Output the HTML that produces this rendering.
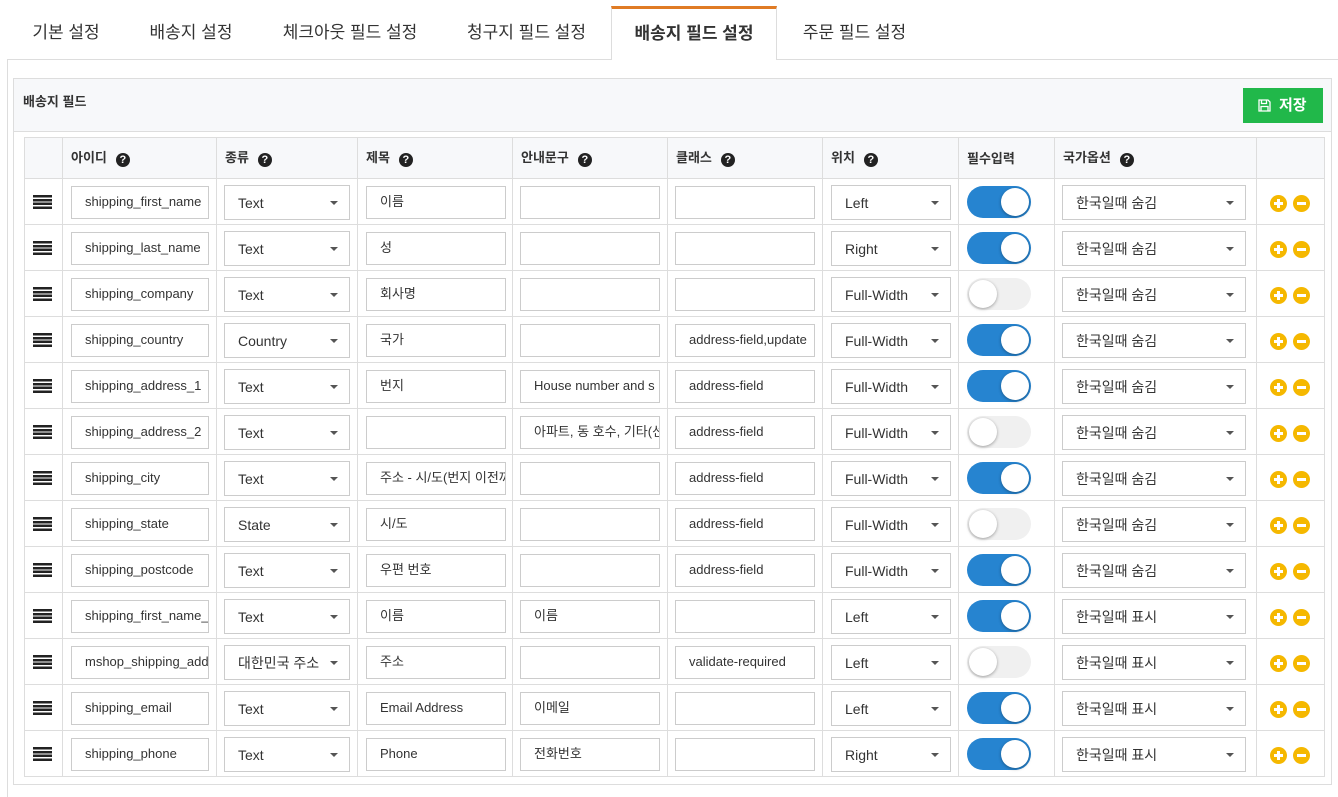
<!DOCTYPE html>
<html><head><meta charset="utf-8">
<style>
*{box-sizing:border-box;margin:0;padding:0}
html,body{width:1338px;height:797px;overflow:hidden}
body{background:#fff;font-family:"Liberation Sans","Noto Sans CJK KR",sans-serif;color:#333;position:relative}
.tab{position:absolute;top:6px;height:54px;font-size:17px;line-height:54px;text-align:center;color:#333}
.tab.act{border:1px solid #ddd;border-top:3px solid #e07b24;border-bottom:none;background:#fff;font-weight:bold;z-index:2;line-height:50px}
.outer{position:absolute;left:7px;top:59px;width:1340px;height:760px;border:1px solid #ddd}
.box{position:absolute;left:13px;top:78px;width:1319px;height:707px;border:1px solid #ddd;background:#fff}
.hdr{position:absolute;left:0;top:0;width:100%;height:53px;background:#f7f8fa;border-bottom:1px solid #ddd}
.hdr b{position:absolute;left:9px;top:12px;font-size:13px}
.save{position:absolute;left:1229px;top:9px;width:80px;height:35px;background:#21b84a;color:#fff;font-weight:bold;font-size:15px;line-height:35px;padding-left:36px}
table{position:absolute;left:24px;top:137px;border-collapse:collapse;table-layout:fixed}
td,th{border:1px solid #ddd;padding:0;position:relative}
th{height:41px;background:#f7f8fa;text-align:left;font-size:13px;padding-left:8px;font-weight:bold;padding-bottom:2px}
td{height:46px}
.q{display:inline-block;width:14px;height:14px;border-radius:50%;background:#222;color:#fff;font-size:11px;line-height:14px;text-align:center;margin-left:9px;vertical-align:-1px}
.in{position:absolute;top:7px;height:33px;border:1px solid #ccc;font-size:13px;line-height:30px;padding-left:13px;white-space:nowrap;overflow:hidden;color:#333}
.sel{position:absolute;top:6px;height:35px;border:1px solid #ccc;font-size:14px;line-height:35px;padding-left:13px;white-space:nowrap;overflow:hidden}
.sel:after{content:"";position:absolute;right:11px;top:15px;border:4px solid transparent;border-top:4px solid #555}
.ham{position:absolute;left:8px;top:16px;width:19px;height:14px;background:repeating-linear-gradient(#222 0 2.6px,transparent 2.6px 3.8px)}
.tg{position:absolute;left:8px;top:7px;width:64px;height:32px;border-radius:16px;background:#2684d0}
.tg:after{content:"";position:absolute;right:2px;top:2px;width:28px;height:28px;border-radius:50%;background:#fff;box-shadow:0 1px 3px rgba(0,0,0,.35)}
.tg.off{background:#f0f0f0}
.tg.off:after{right:auto;left:2px}
.pm{position:absolute;top:16px;width:17px;height:17px;border-radius:50%;background:#f5b800}
.pm:before{content:"";position:absolute;left:4px;top:7px;width:9px;height:3px;background:#fff}
.pm.p:after{content:"";position:absolute;left:7px;top:4px;width:3px;height:9px;background:#fff}
</style></head><body>
<div class="outer"></div>
<div class="tab" style="left:8px;width:116px">기본 설정</div>
<div class="tab" style="left:124px;width:134px">배송지 설정</div>
<div class="tab" style="left:258px;width:184px">체크아웃 필드 설정</div>
<div class="tab" style="left:442px;width:169px">청구지 필드 설정</div>
<div class="tab act" style="left:611px;width:166px">배송지 필드 설정</div>
<div class="tab" style="left:777px;width:155px">주문 필드 설정</div>
<div class="box"><div class="hdr"><b>배송지 필드</b></div>
<div class="save"><svg style="position:absolute;left:15px;top:11px" width="13" height="13" viewBox="0 0 13 13"><path d="M1 1h9l2 2v9H1z M3.5 1v3.5h5V1 M3 12V7.5h7V12" fill="none" stroke="#fff" stroke-width="1.3"/></svg>저장</div></div>
<table>
<colgroup><col style="width:38px"><col style="width:154px"><col style="width:141px"><col style="width:155px"><col style="width:155px"><col style="width:155px"><col style="width:136px"><col style="width:96px"><col style="width:202px"><col style="width:68px"></colgroup>
<tr><th></th><th>아이디<span class="q">?</span></th><th>종류<span class="q">?</span></th><th>제목<span class="q">?</span></th><th>안내문구<span class="q">?</span></th><th>클래스<span class="q">?</span></th><th>위치<span class="q">?</span></th><th>필수입력</th><th>국가옵션<span class="q">?</span></th><th></th></tr>
<tr><td><div class="ham"></div></td><td><div class="in" style="left:8px;width:138px">shipping_first_name</div></td><td><div class="sel" style="left:7px;width:126px">Text</div></td><td><div class="in" style="left:8px;width:140px">이름</div></td><td><div class="in" style="left:7px;width:140px"></div></td><td><div class="in" style="left:7px;width:140px"></div></td><td><div class="sel" style="left:8px;width:120px">Left</div></td><td><div class="tg"></div></td><td><div class="sel" style="left:7px;width:184px">한국일때 숨김</div></td><td><div class="pm p" style="left:13px"></div><div class="pm" style="left:36px"></div></td></tr>
<tr><td><div class="ham"></div></td><td><div class="in" style="left:8px;width:138px">shipping_last_name</div></td><td><div class="sel" style="left:7px;width:126px">Text</div></td><td><div class="in" style="left:8px;width:140px">성</div></td><td><div class="in" style="left:7px;width:140px"></div></td><td><div class="in" style="left:7px;width:140px"></div></td><td><div class="sel" style="left:8px;width:120px">Right</div></td><td><div class="tg"></div></td><td><div class="sel" style="left:7px;width:184px">한국일때 숨김</div></td><td><div class="pm p" style="left:13px"></div><div class="pm" style="left:36px"></div></td></tr>
<tr><td><div class="ham"></div></td><td><div class="in" style="left:8px;width:138px">shipping_company</div></td><td><div class="sel" style="left:7px;width:126px">Text</div></td><td><div class="in" style="left:8px;width:140px">회사명</div></td><td><div class="in" style="left:7px;width:140px"></div></td><td><div class="in" style="left:7px;width:140px"></div></td><td><div class="sel" style="left:8px;width:120px">Full-Width</div></td><td><div class="tg off"></div></td><td><div class="sel" style="left:7px;width:184px">한국일때 숨김</div></td><td><div class="pm p" style="left:13px"></div><div class="pm" style="left:36px"></div></td></tr>
<tr><td><div class="ham"></div></td><td><div class="in" style="left:8px;width:138px">shipping_country</div></td><td><div class="sel" style="left:7px;width:126px">Country</div></td><td><div class="in" style="left:8px;width:140px">국가</div></td><td><div class="in" style="left:7px;width:140px"></div></td><td><div class="in" style="left:7px;width:140px">address-field,update</div></td><td><div class="sel" style="left:8px;width:120px">Full-Width</div></td><td><div class="tg"></div></td><td><div class="sel" style="left:7px;width:184px">한국일때 숨김</div></td><td><div class="pm p" style="left:13px"></div><div class="pm" style="left:36px"></div></td></tr>
<tr><td><div class="ham"></div></td><td><div class="in" style="left:8px;width:138px">shipping_address_1</div></td><td><div class="sel" style="left:7px;width:126px">Text</div></td><td><div class="in" style="left:8px;width:140px">번지</div></td><td><div class="in" style="left:7px;width:140px">House number and s</div></td><td><div class="in" style="left:7px;width:140px">address-field</div></td><td><div class="sel" style="left:8px;width:120px">Full-Width</div></td><td><div class="tg"></div></td><td><div class="sel" style="left:7px;width:184px">한국일때 숨김</div></td><td><div class="pm p" style="left:13px"></div><div class="pm" style="left:36px"></div></td></tr>
<tr><td><div class="ham"></div></td><td><div class="in" style="left:8px;width:138px">shipping_address_2</div></td><td><div class="sel" style="left:7px;width:126px">Text</div></td><td><div class="in" style="left:8px;width:140px"></div></td><td><div class="in" style="left:7px;width:140px">아파트, 동 호수, 기타(선</div></td><td><div class="in" style="left:7px;width:140px">address-field</div></td><td><div class="sel" style="left:8px;width:120px">Full-Width</div></td><td><div class="tg off"></div></td><td><div class="sel" style="left:7px;width:184px">한국일때 숨김</div></td><td><div class="pm p" style="left:13px"></div><div class="pm" style="left:36px"></div></td></tr>
<tr><td><div class="ham"></div></td><td><div class="in" style="left:8px;width:138px">shipping_city</div></td><td><div class="sel" style="left:7px;width:126px">Text</div></td><td><div class="in" style="left:8px;width:140px">주소 - 시/도(번지 이전까</div></td><td><div class="in" style="left:7px;width:140px"></div></td><td><div class="in" style="left:7px;width:140px">address-field</div></td><td><div class="sel" style="left:8px;width:120px">Full-Width</div></td><td><div class="tg"></div></td><td><div class="sel" style="left:7px;width:184px">한국일때 숨김</div></td><td><div class="pm p" style="left:13px"></div><div class="pm" style="left:36px"></div></td></tr>
<tr><td><div class="ham"></div></td><td><div class="in" style="left:8px;width:138px">shipping_state</div></td><td><div class="sel" style="left:7px;width:126px">State</div></td><td><div class="in" style="left:8px;width:140px">시/도</div></td><td><div class="in" style="left:7px;width:140px"></div></td><td><div class="in" style="left:7px;width:140px">address-field</div></td><td><div class="sel" style="left:8px;width:120px">Full-Width</div></td><td><div class="tg off"></div></td><td><div class="sel" style="left:7px;width:184px">한국일때 숨김</div></td><td><div class="pm p" style="left:13px"></div><div class="pm" style="left:36px"></div></td></tr>
<tr><td><div class="ham"></div></td><td><div class="in" style="left:8px;width:138px">shipping_postcode</div></td><td><div class="sel" style="left:7px;width:126px">Text</div></td><td><div class="in" style="left:8px;width:140px">우편 번호</div></td><td><div class="in" style="left:7px;width:140px"></div></td><td><div class="in" style="left:7px;width:140px">address-field</div></td><td><div class="sel" style="left:8px;width:120px">Full-Width</div></td><td><div class="tg"></div></td><td><div class="sel" style="left:7px;width:184px">한국일때 숨김</div></td><td><div class="pm p" style="left:13px"></div><div class="pm" style="left:36px"></div></td></tr>
<tr><td><div class="ham"></div></td><td><div class="in" style="left:8px;width:138px">shipping_first_name_</div></td><td><div class="sel" style="left:7px;width:126px">Text</div></td><td><div class="in" style="left:8px;width:140px">이름</div></td><td><div class="in" style="left:7px;width:140px">이름</div></td><td><div class="in" style="left:7px;width:140px"></div></td><td><div class="sel" style="left:8px;width:120px">Left</div></td><td><div class="tg"></div></td><td><div class="sel" style="left:7px;width:184px">한국일때 표시</div></td><td><div class="pm p" style="left:13px"></div><div class="pm" style="left:36px"></div></td></tr>
<tr><td><div class="ham"></div></td><td><div class="in" style="left:8px;width:138px">mshop_shipping_address</div></td><td><div class="sel" style="left:7px;width:126px">대한민국 주소</div></td><td><div class="in" style="left:8px;width:140px">주소</div></td><td><div class="in" style="left:7px;width:140px"></div></td><td><div class="in" style="left:7px;width:140px">validate-required</div></td><td><div class="sel" style="left:8px;width:120px">Left</div></td><td><div class="tg off"></div></td><td><div class="sel" style="left:7px;width:184px">한국일때 표시</div></td><td><div class="pm p" style="left:13px"></div><div class="pm" style="left:36px"></div></td></tr>
<tr><td><div class="ham"></div></td><td><div class="in" style="left:8px;width:138px">shipping_email</div></td><td><div class="sel" style="left:7px;width:126px">Text</div></td><td><div class="in" style="left:8px;width:140px">Email Address</div></td><td><div class="in" style="left:7px;width:140px">이메일</div></td><td><div class="in" style="left:7px;width:140px"></div></td><td><div class="sel" style="left:8px;width:120px">Left</div></td><td><div class="tg"></div></td><td><div class="sel" style="left:7px;width:184px">한국일때 표시</div></td><td><div class="pm p" style="left:13px"></div><div class="pm" style="left:36px"></div></td></tr>
<tr><td><div class="ham"></div></td><td><div class="in" style="left:8px;width:138px">shipping_phone</div></td><td><div class="sel" style="left:7px;width:126px">Text</div></td><td><div class="in" style="left:8px;width:140px">Phone</div></td><td><div class="in" style="left:7px;width:140px">전화번호</div></td><td><div class="in" style="left:7px;width:140px"></div></td><td><div class="sel" style="left:8px;width:120px">Right</div></td><td><div class="tg"></div></td><td><div class="sel" style="left:7px;width:184px">한국일때 표시</div></td><td><div class="pm p" style="left:13px"></div><div class="pm" style="left:36px"></div></td></tr>
</table>
</body></html>
